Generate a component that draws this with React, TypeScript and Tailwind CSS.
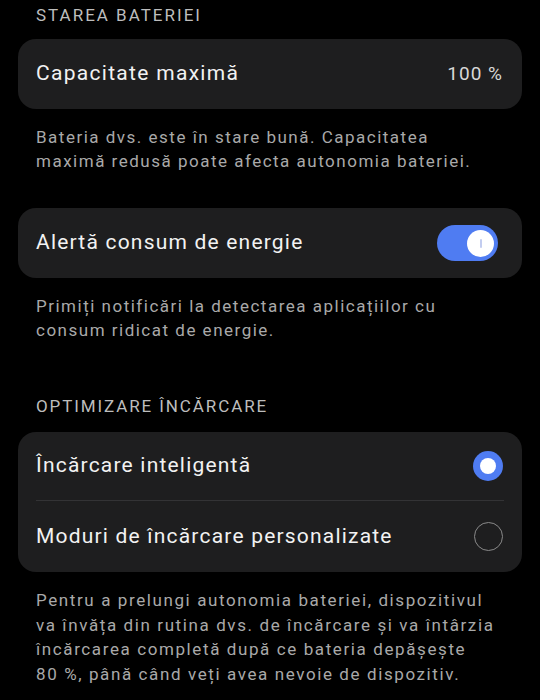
import { useState } from 'react'

const font = { fontFamily: 'Roboto, "Noto Sans", sans-serif' }

function Toggle({ on, onChange }: { on: boolean; onChange: () => void }) {
  return (
    <button
      onClick={onChange}
      className={`relative w-[61px] h-[36px] rounded-full shrink-0 ${on ? 'bg-[#4f7cf2]' : 'bg-[#3a3a3c]'}`}
    >
      <span
        className={`absolute top-[4.5px] w-[27px] h-[27px] rounded-full bg-white flex items-center justify-center ${on ? 'right-[4px]' : 'left-[4px]'}`}
      >
        <span className="w-[2px] h-[9px] rounded-full bg-[#c3cdf0]" />
      </span>
    </button>
  )
}

function Radio({ checked }: { checked: boolean }) {
  return checked ? (
    <span className="w-[30px] h-[30px] rounded-full bg-[#4f7cf2] flex items-center justify-center shrink-0">
      <span className="w-[16px] h-[16px] rounded-full bg-white" />
    </span>
  ) : (
    <span className="w-[29px] h-[29px] rounded-full border-[1.5px] border-[#8a8a8a] shrink-0" />
  )
}

export default function App() {
  const [alert, setAlert] = useState(true)
  const [mode, setMode] = useState<'smart' | 'custom'>('smart')

  return (
    <div className="w-[540px] h-[700px] bg-black overflow-hidden px-[18px]" style={font}>
      {/* Starea bateriei */}
      <div className="pt-[5px] pl-[18px] text-[17px] leading-[20px] tracking-[2px] text-[#bdbdbd]">
        STAREA BATERIEI
      </div>

      <div className="mt-[14px] h-[70px] rounded-[18px] bg-[#1e1e1f] flex items-center justify-between pl-[18px] pr-[19px]">
        <span className="text-[21px] tracking-[1.3px] text-[#f2f2f2]">Capacitate maximă</span>
        <span className="text-[19px] tracking-[1px] text-[#d8d8d8]">100 %</span>
      </div>

      <p className="mt-[16px] pl-[18px] whitespace-nowrap text-[17px] leading-[24px] tracking-[1.5px] text-[#a9a9a9]">
        Bateria dvs. este în stare bună. Capacitatea
        <br />
        maximă redusă poate afecta autonomia bateriei.
      </p>

      <div className="mt-[35px] h-[70px] rounded-[18px] bg-[#1e1e1f] flex items-center justify-between pl-[18px] pr-[24px]">
        <span className="text-[21px] tracking-[1.2px] text-[#f2f2f2]">Alertă consum de energie</span>
        <Toggle on={alert} onChange={() => setAlert(!alert)} />
      </div>

      <p className="mt-[16px] pl-[18px] whitespace-nowrap text-[17px] leading-[24px] tracking-[1.5px] text-[#a9a9a9]">
        Primiți notificări la detectarea aplicațiilor cu
        <br />
        consum ridicat de energie.
      </p>

      {/* Optimizare incarcare */}
      <div className="mt-[54px] pl-[18px] text-[17px] leading-[20px] tracking-[1.9px] text-[#bdbdbd]">
        OPTIMIZARE ÎNCĂRCARE
      </div>

      <div className="mt-[16px] rounded-[18px] bg-[#1e1e1f] px-[18px]">
        <button
          onClick={() => setMode('smart')}
          className="w-full h-[69px] flex items-center justify-between border-b border-[#333335] pr-[1px]"
        >
          <span className="text-[21px] tracking-[1.2px] text-[#f2f2f2]">Încărcare inteligentă</span>
          <Radio checked={mode === 'smart'} />
        </button>
        <button
          onClick={() => setMode('custom')}
          className="w-full h-[71px] flex items-center justify-between pr-[1px]"
        >
          <span className="text-[21px] tracking-[1.2px] text-[#f2f2f2]">Moduri de încărcare personalizate</span>
          <Radio checked={mode === 'custom'} />
        </button>
      </div>

      <p className="mt-[16px] pl-[18px] whitespace-nowrap text-[17px] leading-[24.5px] tracking-[1.6px] text-[#a9a9a9]">
        Pentru a prelungi autonomia bateriei, dispozitivul
        <br />
        va învăța din rutina dvs. de încărcare și va întârzia
        <br />
        încărcarea completă după ce bateria depășește
        <br />
        80 %, până când veți avea nevoie de dispozitiv.
      </p>
    </div>
  )
}
